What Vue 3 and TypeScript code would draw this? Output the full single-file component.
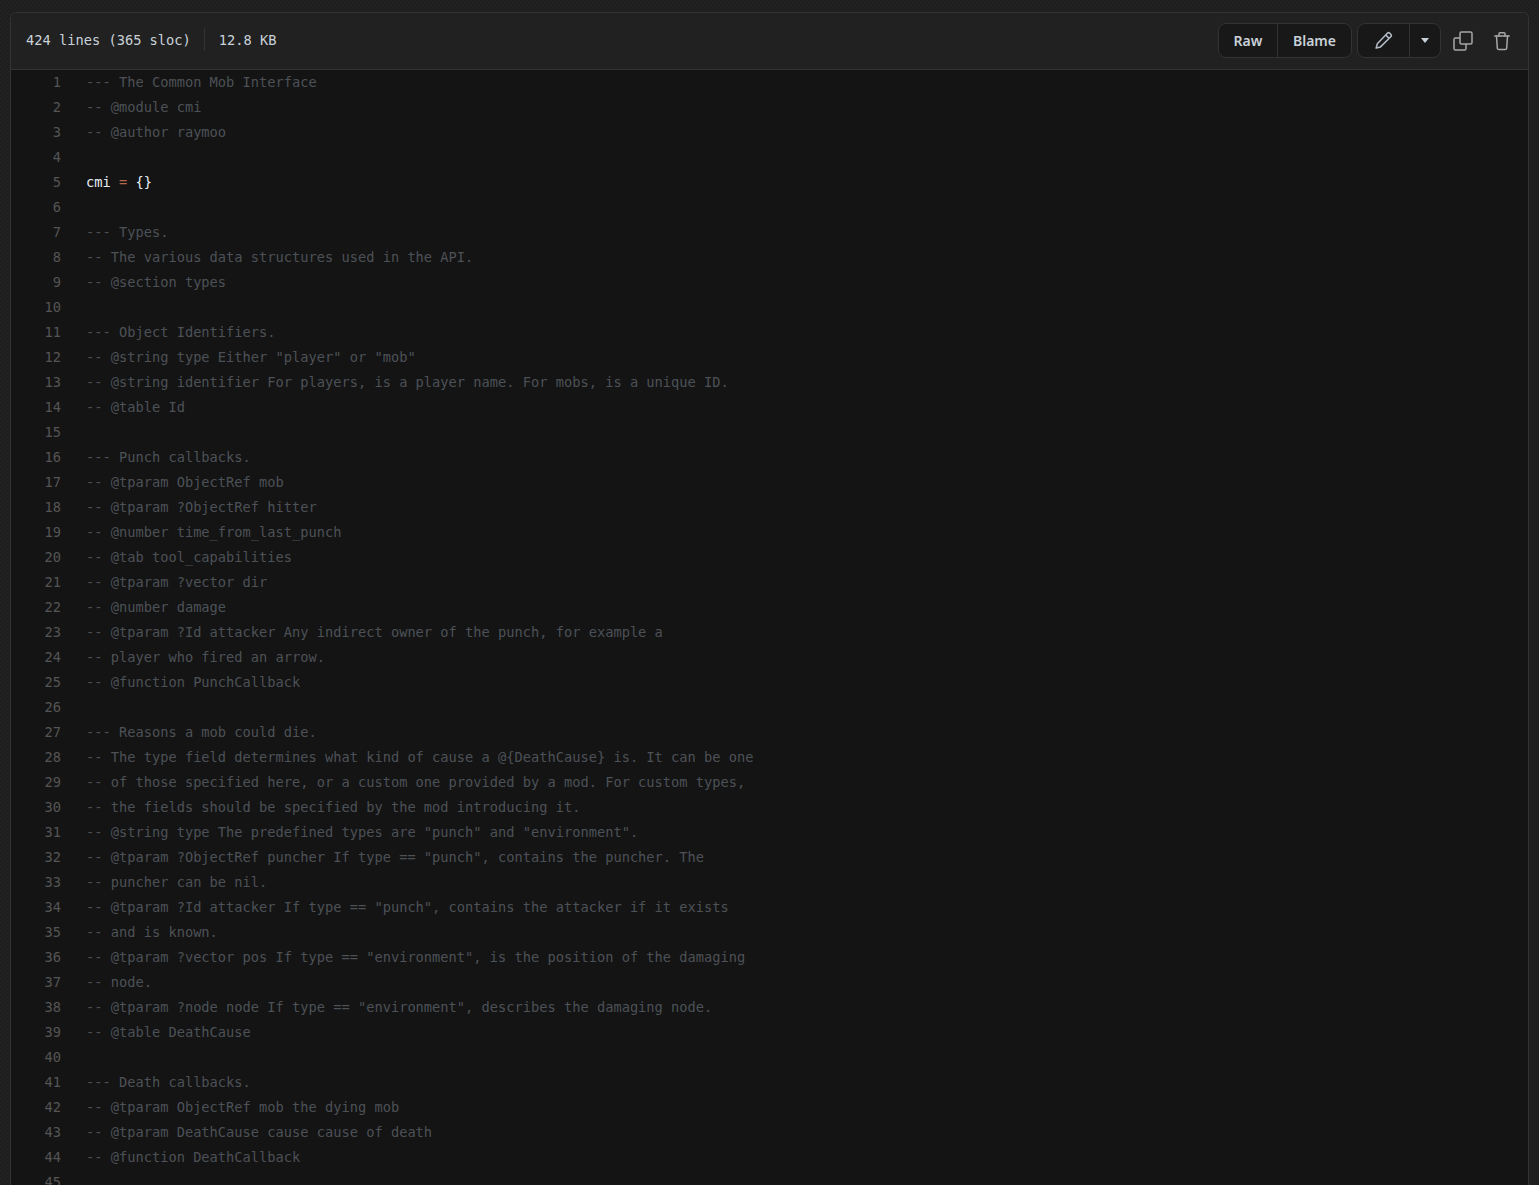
<script setup lang="ts">
const lines: string[] = [
  '--- The Common Mob Interface',
  '-- @module cmi',
  '-- @author raymoo',
  '',
  '@@cmi',
  '',
  '--- Types.',
  '-- The various data structures used in the API.',
  '-- @section types',
  '',
  '--- Object Identifiers.',
  '-- @string type Either "player" or "mob"',
  '-- @string identifier For players, is a player name. For mobs, is a unique ID.',
  '-- @table Id',
  '',
  '--- Punch callbacks.',
  '-- @tparam ObjectRef mob',
  '-- @tparam ?ObjectRef hitter',
  '-- @number time_from_last_punch',
  '-- @tab tool_capabilities',
  '-- @tparam ?vector dir',
  '-- @number damage',
  '-- @tparam ?Id attacker Any indirect owner of the punch, for example a',
  '-- player who fired an arrow.',
  '-- @function PunchCallback',
  '',
  '--- Reasons a mob could die.',
  '-- The type field determines what kind of cause a @{DeathCause} is. It can be one',
  '-- of those specified here, or a custom one provided by a mod. For custom types,',
  '-- the fields should be specified by the mod introducing it.',
  '-- @string type The predefined types are "punch" and "environment".',
  '-- @tparam ?ObjectRef puncher If type == "punch", contains the puncher. The',
  '-- puncher can be nil.',
  '-- @tparam ?Id attacker If type == "punch", contains the attacker if it exists',
  '-- and is known.',
  '-- @tparam ?vector pos If type == "environment", is the position of the damaging',
  '-- node.',
  '-- @tparam ?node node If type == "environment", describes the damaging node.',
  '-- @table DeathCause',
  '',
  '--- Death callbacks.',
  '-- @tparam ObjectRef mob the dying mob',
  '-- @tparam DeathCause cause cause of death',
  '-- @function DeathCallback',
  '',
]
</script>

<template>
  <div class="page">
    <section class="file">
      <header class="head">
        <div class="meta">
          <span class="stat">424 lines (365 sloc)</span>
          <span class="sep"></span>
          <span class="stat">12.8 KB</span>
        </div>
        <div class="actions">
          <div class="group">
            <button class="btn raw">Raw</button>
            <button class="btn blame">Blame</button>
          </div>
          <div class="group">
            <button class="btn edit" aria-label="Edit">
              <svg width="19" height="19" viewBox="0 0 16 16" fill="none" stroke="#b1bac4" stroke-width="1.3" stroke-linejoin="round">
                <path d="M11.2 1.9a1.5 1.5 0 0 1 2.1 0l.8.8a1.5 1.5 0 0 1 0 2.1l-8.6 8.6-3.7 1 1-3.7z" />
                <path d="M9.8 3.3l2.9 2.9" />
              </svg>
            </button>
            <button class="btn caret" aria-label="More"><span class="tri"></span></button>
          </div>
          <button class="icon" aria-label="Copy">
            <svg width="20" height="20" viewBox="0 0 20 20" fill="none" stroke="#a8a8a8" stroke-width="1.5" stroke-linejoin="round">
              <rect x="7" y="1" width="12" height="12" rx="1.500" />
              <path d="M7 7H2.500A1.500 1.500 0 0 0 1 8.500V17.500A1.500 1.500 0 0 0 2.500 19H11.500A1.500 1.500 0 0 0 13 17.500V13" />
            </svg>
          </button>
          <button class="icon" aria-label="Delete">
            <svg width="20" height="20" viewBox="0 0 20 20" fill="none" stroke="#a8a8a8" stroke-width="1.5" stroke-linecap="round" stroke-linejoin="round">
              <path d="M2.800 5H17.200" />
              <path d="M7 5V2.700A1 1 0 0 1 8 1.700H12A1 1 0 0 1 13 2.700V5" />
              <path d="M4.500 5L5.300 17.300A1.500 1.500 0 0 0 6.800 18.500H13.200A1.500 1.500 0 0 0 14.700 17.300L15.500 5" />
            </svg>
          </button>
        </div>
      </header>
      <div class="code">
        <div v-for="(line, i) in lines" :key="i" class="row">
          <span class="num">{{ i + 1 }}</span>
          <span v-if="line === '@@cmi'" class="text"><span class="id">cmi</span> <span class="op">=</span> <span class="id">{}</span></span>
          <span v-else class="text comment">{{ line }}</span>
        </div>
      </div>
    </section>
  </div>
</template>

<style>
html, body { margin: 0; background: #1e1e1e; }
</style>

<style scoped>
.page {
  height: 1185px;
  overflow: hidden;
  box-sizing: border-box;
  padding: 12px 10px 0 10px;
  background-color: #1e1e1e;
  background-image:
    linear-gradient(45deg, #212121 25%, transparent 25%, transparent 75%, #212121 75%),
    linear-gradient(45deg, #212121 25%, transparent 25%, transparent 75%, #212121 75%);
  background-size: 4px 4px, 4px 4px;
  background-position: 0 0, 2px 2px;
}
.file {
  border: 1px solid #333;
  border-bottom: 0;
  border-radius: 6px 6px 0 0;
  background: #141414;
  height: 100%;
  overflow: hidden;
}
.head {
  height: 57px;
  box-sizing: border-box;
  padding: 0 13px 1px 15px;
  background: #212121;
  border-bottom: 1px solid #333;
  display: flex;
  align-items: center;
  justify-content: space-between;
}
.meta {
  display: flex;
  align-items: center;
  padding-bottom: 2px;
  font: 13.7px/20px "DejaVu Sans Mono", "Liberation Mono", monospace;
  color: #c9d1d9;
}
.sep {
  width: 1px;
  height: 23px;
  background: #333;
  margin: 0 14px 0 13px;
}
.actions { display: flex; align-items: center; }
.group {
  display: flex;
  height: 35px;
  box-sizing: border-box;
  border: 1px solid #333;
  border-radius: 8px;
  overflow: hidden;
  background: #181818;
  margin-right: 5px;
}
.btn {
  background: transparent;
  border: 0;
  padding: 0;
  color: #c9d1d9;
  font: 600 14px/20px "Noto Sans", "Open Sans", sans-serif;
  display: flex;
  align-items: center;
  justify-content: center;
}
.btn + .btn { border-left: 1px solid #333; }
.raw { width: 58px; }
.blame { width: 74px; }
.edit { width: 51px; }
.caret { width: 31px; }
.tri {
  width: 0; height: 0;
  border: 4.500px solid transparent;
  border-top: 5px solid #c9d1d9;
  border-bottom: 0;
}
.icon {
  background: transparent;
  border: 0;
  padding: 0;
  width: 20px;
  height: 20px;
  margin-left: 7px;
  margin-right: 12px;
  display: flex;
}
.icon:last-child { margin-right: 3px; }
.row {
  height: 25px;
  display: flex;
  font: 13.7px/25px "DejaVu Sans Mono", "Liberation Mono", monospace;
  white-space: pre;
}
.num {
  width: 50px;
  text-align: right;
  color: #555;
  flex: none;
}
.text { margin-left: 25px; }
.comment { color: #4c5157; }
.id { color: #e6edf3; }
.op { color: #b5674a; }
</style>
